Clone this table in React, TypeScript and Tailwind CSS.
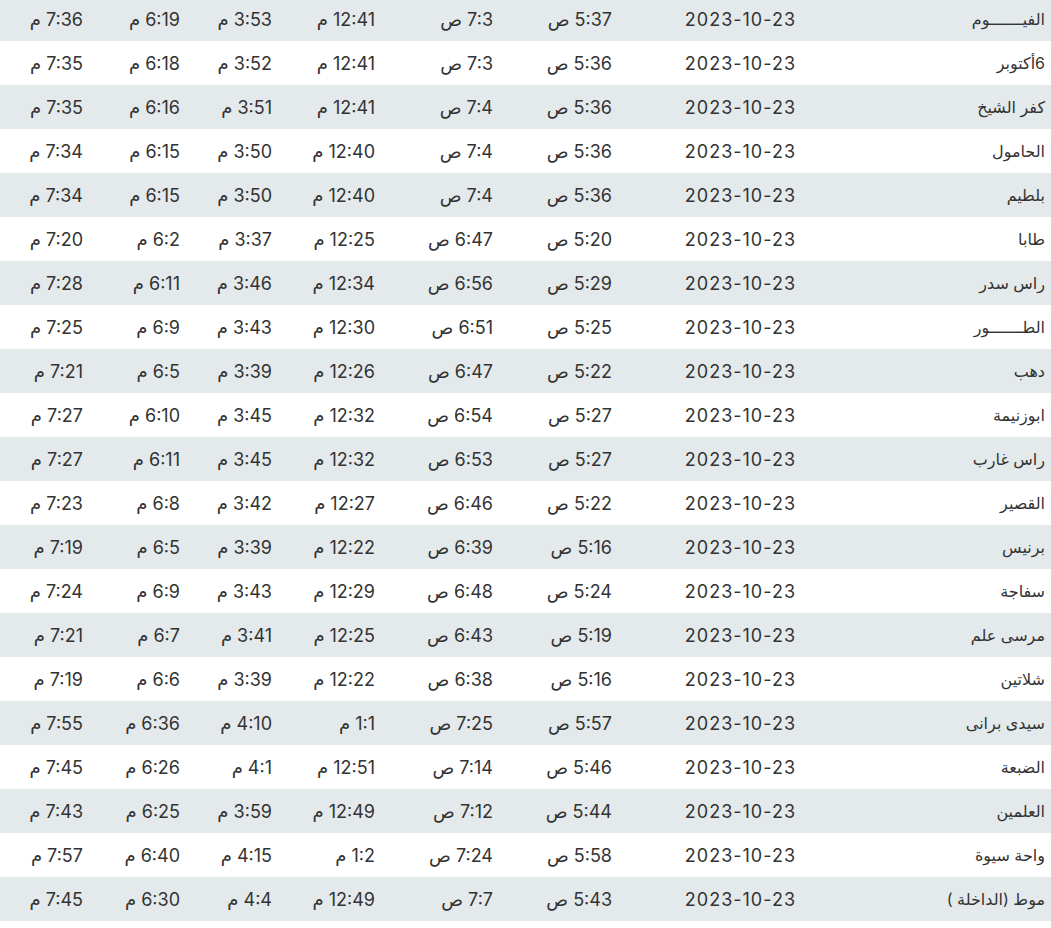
import React from "react";

type Row = [string, string, string, string, string, string, string];

const rows: Row[] = [
  ["الفيـــــــوم", "5:37 ص", "7:3 ص", "12:41 م", "3:53 م", "6:19 م", "7:36 م"],
  ["6أكتوبر", "5:36 ص", "7:3 ص", "12:41 م", "3:52 م", "6:18 م", "7:35 م"],
  ["كفر الشيخ", "5:36 ص", "7:4 ص", "12:41 م", "3:51 م", "6:16 م", "7:35 م"],
  ["الحامول", "5:36 ص", "7:4 ص", "12:40 م", "3:50 م", "6:15 م", "7:34 م"],
  ["بلطيم", "5:36 ص", "7:4 ص", "12:40 م", "3:50 م", "6:15 م", "7:34 م"],
  ["طابا", "5:20 ص", "6:47 ص", "12:25 م", "3:37 م", "6:2 م", "7:20 م"],
  ["راس سدر", "5:29 ص", "6:56 ص", "12:34 م", "3:46 م", "6:11 م", "7:28 م"],
  ["الطـــــــور", "5:25 ص", "6:51 ص", "12:30 م", "3:43 م", "6:9 م", "7:25 م"],
  ["دهب", "5:22 ص", "6:47 ص", "12:26 م", "3:39 م", "6:5 م", "7:21 م"],
  ["ابوزنيمة", "5:27 ص", "6:54 ص", "12:32 م", "3:45 م", "6:10 م", "7:27 م"],
  ["راس غارب", "5:27 ص", "6:53 ص", "12:32 م", "3:45 م", "6:11 م", "7:27 م"],
  ["القصير", "5:22 ص", "6:46 ص", "12:27 م", "3:42 م", "6:8 م", "7:23 م"],
  ["برنيس", "5:16 ص", "6:39 ص", "12:22 م", "3:39 م", "6:5 م", "7:19 م"],
  ["سفاجة", "5:24 ص", "6:48 ص", "12:29 م", "3:43 م", "6:9 م", "7:24 م"],
  ["مرسى علم", "5:19 ص", "6:43 ص", "12:25 م", "3:41 م", "6:7 م", "7:21 م"],
  ["شلاتين", "5:16 ص", "6:38 ص", "12:22 م", "3:39 م", "6:6 م", "7:19 م"],
  ["سيدى برانى", "5:57 ص", "7:25 ص", "1:1 م", "4:10 م", "6:36 م", "7:55 م"],
  ["الضبعة", "5:46 ص", "7:14 ص", "12:51 م", "4:1 م", "6:26 م", "7:45 م"],
  ["العلمين", "5:44 ص", "7:12 ص", "12:49 م", "3:59 م", "6:25 م", "7:43 م"],
  ["واحة سيوة", "5:58 ص", "7:24 ص", "1:2 م", "4:15 م", "6:40 م", "7:57 م"],
  ["موط (الداخلة )", "5:43 ص", "7:7 ص", "12:49 م", "4:4 م", "6:30 م", "7:45 م"],
];

export default function App() {
  return (
    <div className="w-[1051px] h-[928px] overflow-hidden bg-white">
      <div
        dir="rtl"
        className="mt-[-3px] flex flex-col text-[18px] text-[#333333] font-['Inter','DejaVu_Sans',sans-serif]"
      >
        {rows.map((r, i) => (
          <div
            key={i}
            className={`grid grid-cols-[250px_183px_119px_118px_103px_92px_97px_89px] h-[44px] items-center ${
              i % 2 === 0 ? "bg-[#e4e9ec]" : "bg-white"
            }`}
          >
            <div className="pr-[6px] text-right text-[16px] whitespace-nowrap">{r[0]}</div>
            <div className="pr-[5px] text-right whitespace-nowrap tracking-[1px]">2023-10-23</div>
            {r.slice(1).map((c, j) => (
              <div key={j} className="pr-[6px] text-right whitespace-nowrap">
                {c}
              </div>
            ))}
          </div>
        ))}
      </div>
    </div>
  );
}
